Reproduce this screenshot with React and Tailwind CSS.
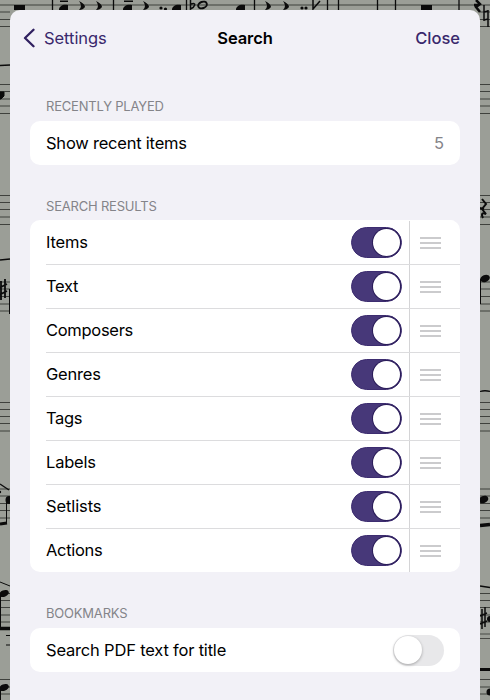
const STAFF_LINES = [
  5, 19.5, 26.5, 84.5, 91.5, 99, 106, 113.5, 195.5, 202.5, 209.5, 217, 224.5,
  282, 289, 296.5, 304, 311, 402.5, 409.5, 416.5, 423.5, 431, 489, 496, 503.5,
  510.5, 518, 593.5, 600.5, 607.5, 615, 622, 679.5, 687, 694,
];

const BAR_LINES = [52.5, 113.5, 186.5, 254.5, 327.5, 338.5, 377.5, 395.5, 459];

function SheetMusic() {
  return (
    <svg className="absolute inset-0 h-[700px] w-[490px]" viewBox="0 0 490 700" fill="none" stroke="#0b0b0b">
      {STAFF_LINES.map((y) => (
        <path key={y} d={`M0 ${y}H490`} stroke="#3f413d" strokeWidth="1.1" />
      ))}
      <path d="M0 12H10M480 12H490" stroke="#3f413d" strokeWidth="1.1" />
      {BAR_LINES.map((x) => (
        <path key={x} d={`M${x} 0V12`} strokeWidth="1.3" />
      ))}

      {/* top staff */}
      <g fill="#0b0b0b" stroke="none">
        <path d="M14 5h11v5h-11zM421 5h11v5h-11z" />
        <path d="M60 0.500h8v1.400h-8zM124 0.500h9v1.400h-9z" />
        <path d="M59 10c0-4 4-6 9-5v5zM123 10c0-4 4-6 9-5v5zM172 10c0-4 4-6 9-5v5zM236 10c0-4 4-6 9-5v5z" />
        <path d="M79 1q6 3 6 6q-2 3-6 3q4-4 0-9zM96 1q6 3 6 6q-2 3-6 3q4-4 0-9zM143 1q6 3 6 6q-2 3-6 3q4-4 0-9zM265 1q6 3 6 6q-2 3-6 3q4-4 0-9zM283 1q6 3 6 6q-2 3-6 3q4-4 0-9z" />
        <circle cx="161" cy="8" r="1.6" />
        <circle cx="165.500" cy="9" r="1.6" />
        <circle cx="302" cy="8" r="1.6" />
        <circle cx="306" cy="8" r="1.6" />
      </g>
      <path d="M190.500 0V9C195 7 197 2 191 4" strokeWidth="1.5" />
      <ellipse cx="202.500" cy="5" rx="4.5" ry="3.2" transform="rotate(-20 202.5 5)" strokeWidth="1.900" />
      <path d="M313 0V9L320 1" strokeWidth="1.5" />
      <path d="M476 0l4 4-4 3 4 5M474 5l4 0" strokeWidth="2.5" />
      <path d="M484 5V21M488 10V27M484 12L488 11M484 20L488 19" strokeWidth="1.5" />

      {/* left margin */}
      <path d="M0 65.500L10 65M0 260L10 259" strokeWidth="1.6" />
      <path d="M0 92H4V96L1 99H0Z" fill="#0b0b0b" />
      <path d="M1 281V300M5 279V298M-1 288L7 284M-1 295L7 291" strokeWidth="1.8" />
      <path d="M9.500 289V314" strokeWidth="1" />
      <path d="M0 484L9 490" strokeWidth="1.3" />
      <circle cx="0" cy="492" r="1.2" fill="#0b0b0b" stroke="none" />
      <ellipse cx="9" cy="500" rx="3.500" ry="4" fill="#0b0b0b" stroke="none" />
      <path d="M6.500 500V524" />
      <path d="M0 524L7 523" strokeWidth="3" />
      <path d="M0 582L10 586" />
      <ellipse cx="4" cy="593.500" rx="5" ry="3.300" transform="rotate(-22 4 593.5)" fill="#0b0b0b" stroke="none" />
      <path d="M0.500 594V628" />
      <path d="M0 628.500H10" strokeWidth="3.500" />
      <path d="M6 635.500H10M6 645H10" />
      <ellipse cx="4" cy="687.500" rx="5" ry="3.300" transform="rotate(-22 4 687.5)" fill="#0b0b0b" stroke="none" />
      <path d="M0.500 688V700" />

      {/* right margin */}
      <path d="M482 199l4 5-4 5 4 5c-4-2-5 0-3 4M480 208l4 1" strokeWidth="2" />
      <ellipse cx="485" cy="278.500" rx="5" ry="3.400" transform="rotate(-22 485 278.5)" fill="#0b0b0b" stroke="none" />
      <path d="M480.500 279V304" />
      <path d="M480 391.500Q485 390 490 391.500" strokeWidth="1.300" />
      <ellipse cx="483.500" cy="499.500" rx="5" ry="3.600" transform="rotate(-22 483.5 499.5)" fill="#0b0b0b" stroke="none" />
      <path d="M480 525.500L490 524.500" strokeWidth="3.300" />
      <path d="M480 586L490 587.500" strokeWidth="1.600" />
      <path d="M482 609V629M485 607V627M480 616L487 613M480 624L487 621" strokeWidth="1.500" />
      <circle cx="490" cy="619" r="3" fill="#0b0b0b" stroke="none" />
      <path d="M480 634H490M480 638.500H490" stroke="#3f413d" strokeWidth="0.900" />
      <path d="M480 669.500H490" strokeWidth="3" />
      <circle cx="490" cy="692" r="3.500" fill="#0b0b0b" stroke="none" />
    </svg>
  );
}

function Toggle({ on }) {
  return (
    <div
      className={
        on
          ? "flex h-[31px] w-[51px] shrink-0 items-center justify-end rounded-full border border-[#3d2d70] bg-[#473879] pr-px"
          : "flex h-[31px] w-[51px] shrink-0 items-center rounded-full bg-[#e8e8ea] pl-px"
      }
    >
      <div
        className={
          on
            ? "size-[27px] rounded-full bg-white shadow-[0_0_0_1px_#2a1c58]"
            : "size-[28px] rounded-full bg-white shadow-[0_1px_3px_rgba(0,0,0,0.3)]"
        }
      />
    </div>
  );
}

function Heading({ children }) {
  return <h2 className="pl-4 text-[13px] leading-4 tracking-[-0.2px] text-[#848489]">{children}</h2>;
}

const RESULTS = [
  ["Items", "tracking-[-0.2px]"],
  ["Text", "tracking-[-0.3px]"],
  ["Composers", "tracking-[-0.3px]"],
  ["Genres", "tracking-[-0.2px]"],
  ["Tags", "tracking-[-0.4px]"],
  ["Labels", "tracking-[-0.2px]"],
  ["Setlists", "tracking-[-0.1px]"],
  ["Actions", "tracking-[-0.3px]"],
];

export default function App() {
  return (
    <div className="relative h-[700px] w-[490px] overflow-hidden bg-[#9b9e97] px-[10px] pt-[10px] font-['Inter','Liberation_Sans',sans-serif] text-black">
      <SheetMusic />
      <main className="relative h-[690px] rounded-t-[10px] bg-[#f2f1f7] px-5">
        <header className="-mx-2 grid h-[55px] grid-cols-3 items-center text-[16.5px] leading-5 text-[#39286c]">
          <div className="flex items-center gap-[9px]">
            <svg className="ml-[1px] h-[20px] w-[12px]" viewBox="0 0 12 20" fill="none" stroke="#302060" strokeWidth="2.3" strokeLinecap="round" strokeLinejoin="round">
              <path d="M10.500 1.700L2 10L10.500 18.300" />
            </svg>
            <span className="tracking-[-0.05px]">Settings</span>
          </div>
          <h1 className="text-center text-[16.5px] font-semibold tracking-[-0.1px] text-black">Search</h1>
          <span className="pr-2 text-right font-medium">Close</span>
        </header>

        <section className="mt-[33px]">
          <Heading>RECENTLY PLAYED</Heading>
          <div className="mt-[7px] flex h-11 items-center justify-between rounded-[10px] bg-white px-4 text-[16.5px]">
            <span className="tracking-[-0.22px]">Show recent items</span>
            <span className="text-[#848489]">5</span>
          </div>
        </section>

        <section className="mt-[33px]">
          <Heading>SEARCH RESULTS</Heading>
          <div className="mt-[6px] overflow-hidden rounded-[10px] bg-white pl-4">
            {RESULTS.map(([label, tracking]) => (
              <div key={label} className="flex h-11 border-t border-[#dcdcde] text-[16.5px] first:border-t-white">
                <div className="flex flex-1 items-center justify-between pr-[7.5px]">
                  <span className={tracking}>{label}</span>
                  <Toggle on />
                </div>
                <div className="flex w-[51px] flex-col justify-center gap-[3px] border-l border-[#d4d4d6] pl-[10px]">
                  <i className="h-[2px] w-[21px] bg-[#cbcbcd]" />
                  <i className="h-[2px] w-[21px] bg-[#cbcbcd]" />
                  <i className="h-[2px] w-[21px] bg-[#cbcbcd]" />
                </div>
              </div>
            ))}
          </div>
        </section>

        <section className="mt-[33px]">
          <Heading>BOOKMARKS</Heading>
          <div className="mt-[7px] flex h-11 items-center justify-between rounded-[10px] bg-white px-4 text-[16.5px]">
            <span className="tracking-[-0.19px]">Search PDF text for title</span>
            <Toggle />
          </div>
        </section>
      </main>
    </div>
  );
}
